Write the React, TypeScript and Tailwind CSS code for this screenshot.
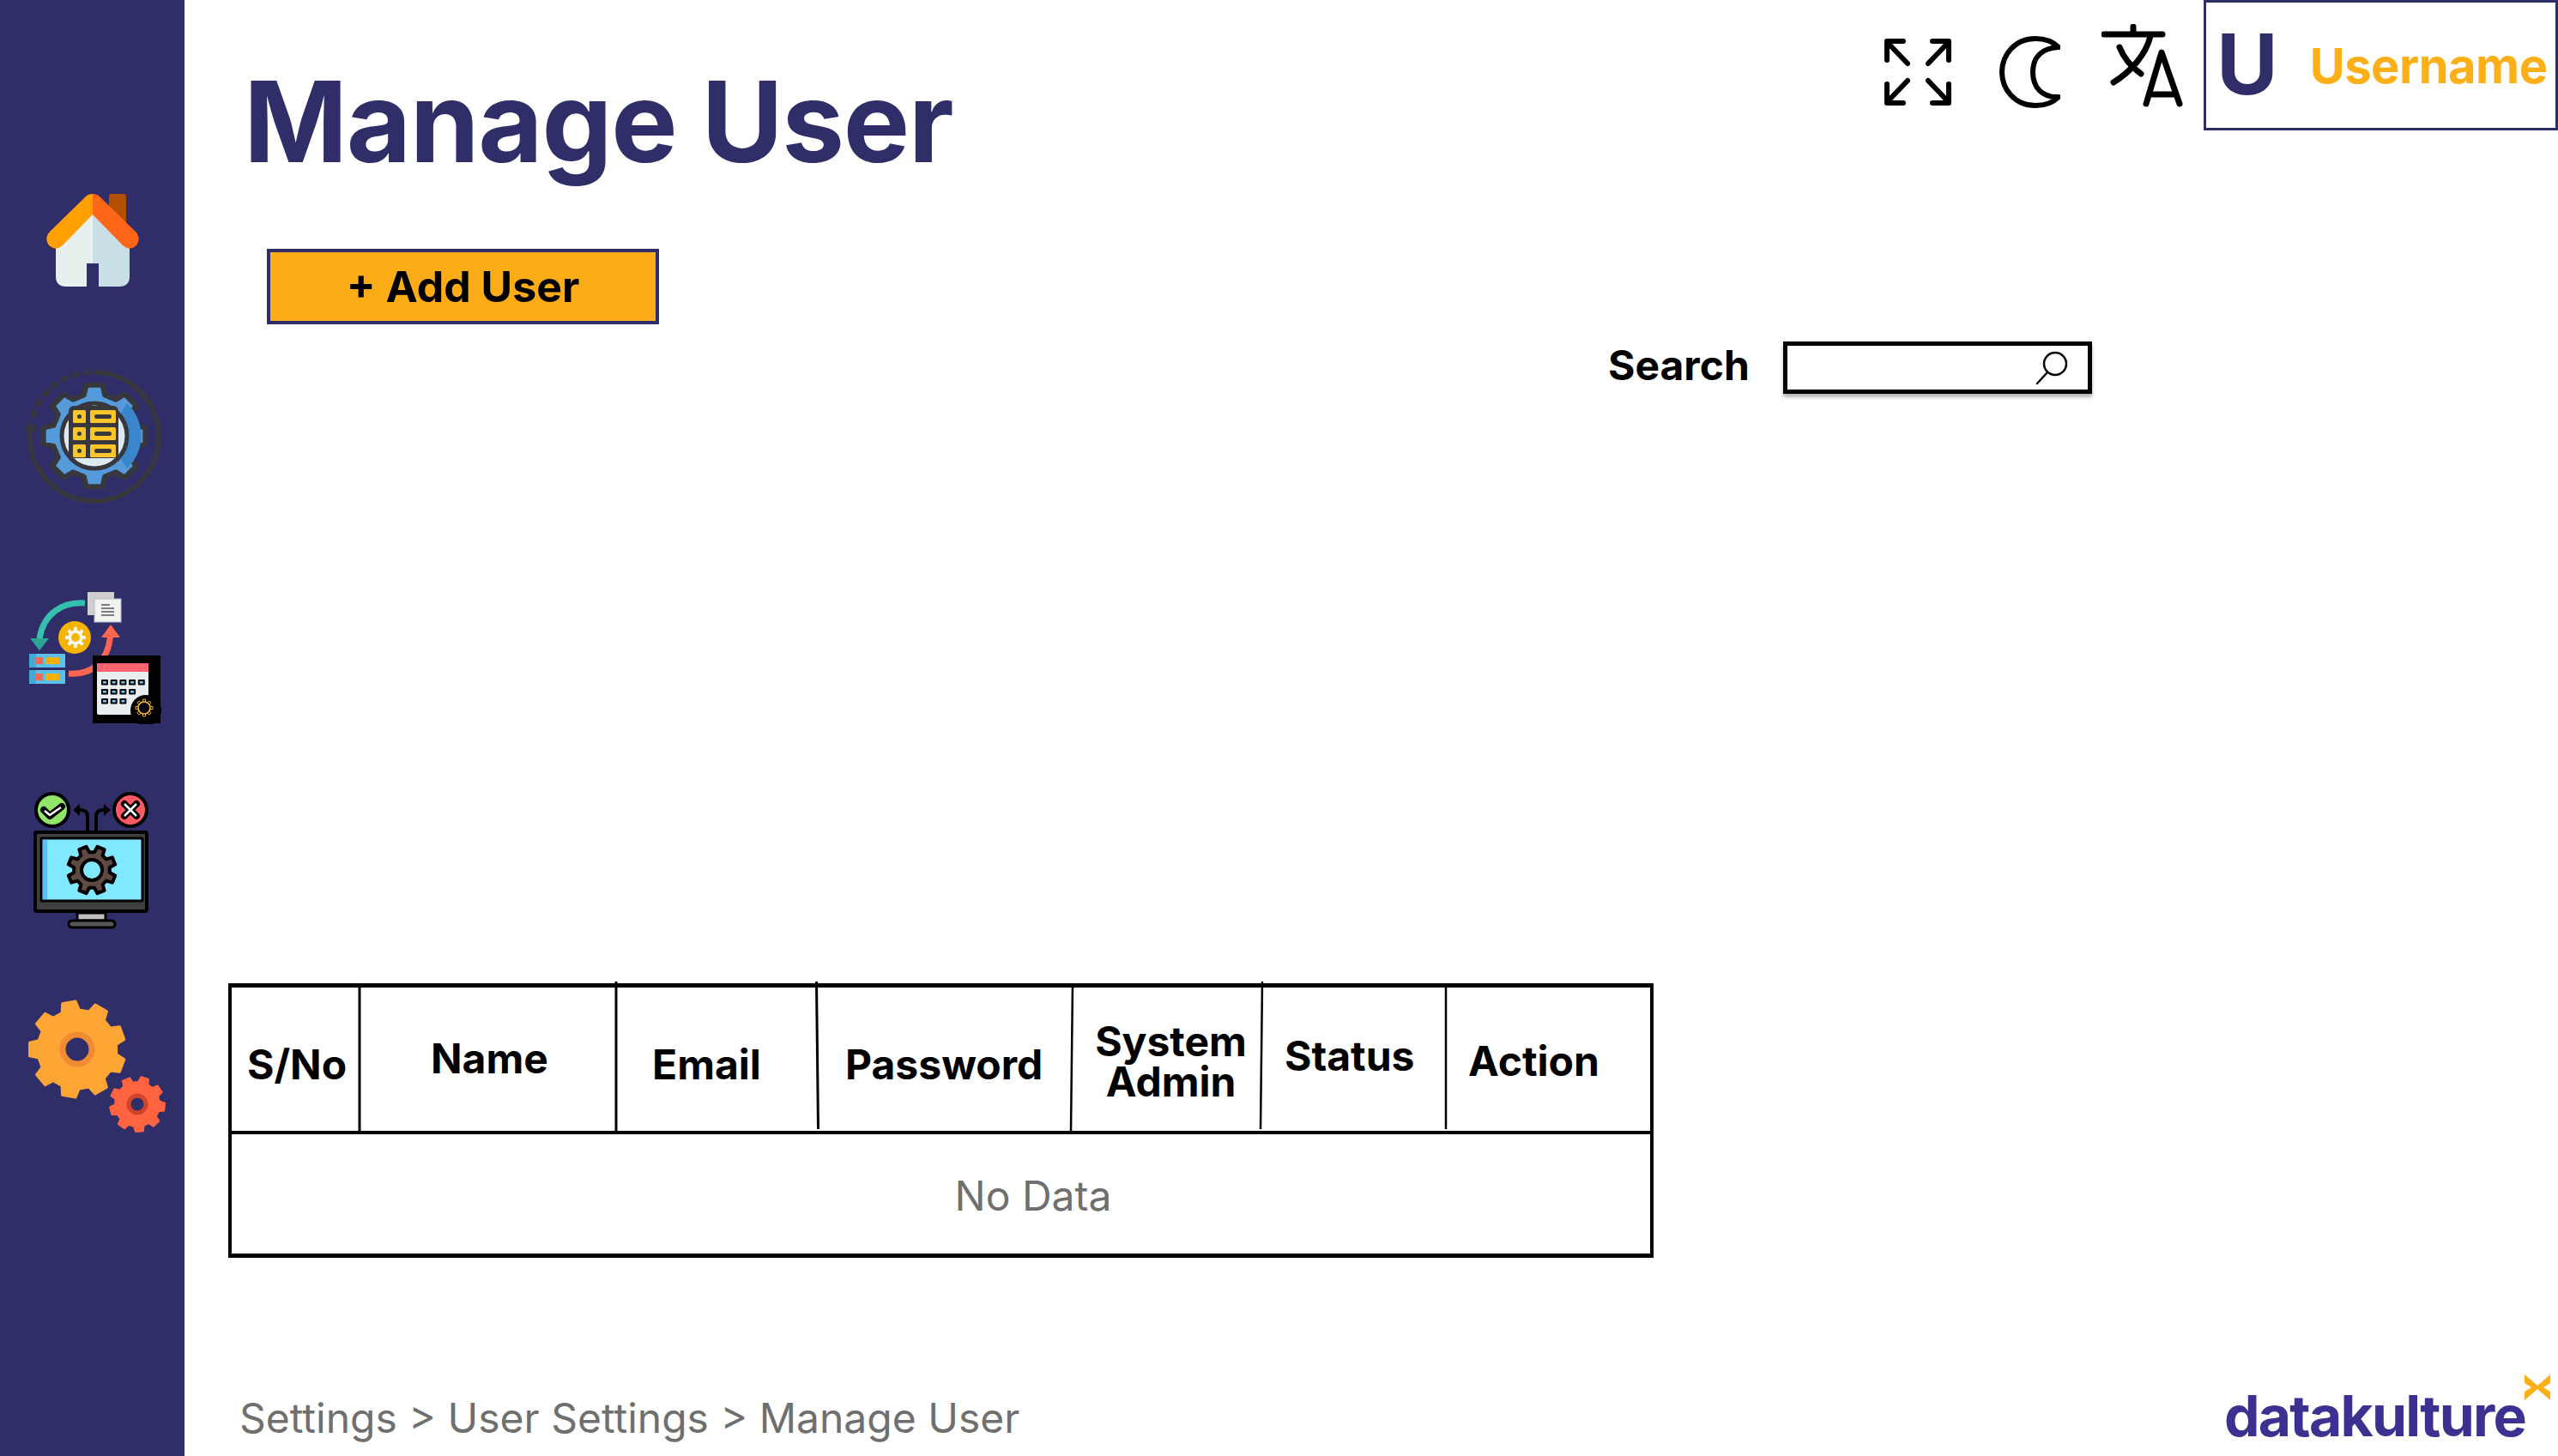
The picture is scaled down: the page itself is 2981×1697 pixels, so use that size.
import React from "react";

const NAVY = "#2f2e69";

function gearPath(cx: number, cy: number, r: number, rr: number, teeth: number, phase = 0) {
  const pts: string[] = [];
  const step = (Math.PI * 2) / teeth;
  for (let i = 0; i < teeth; i++) {
    const a = phase + i * step;
    const list: [number, number][] = [
      [rr, a - step * 0.32],
      [r, a - step * 0.2],
      [r, a + step * 0.2],
      [rr, a + step * 0.32],
    ];
    for (const [rad, ang] of list) {
      pts.push(`${(cx + rad * Math.cos(ang)).toFixed(1)} ${(cy + rad * Math.sin(ang)).toFixed(1)}`);
    }
  }
  return "M" + pts.join("L") + "Z";
}

function Home() {
  return (
    <svg width="108" height="108" viewBox="0 0 108 108" className="ml-[54px] mt-[226px] shrink-0">
      <rect x="73" y="0" width="20" height="40" rx="3" fill="#b35000" />
      <path d="M54 22L11 62V96Q11 108 23 108H47V81H54Z" fill="#e8f0ef" />
      <path d="M54 22L97 62V96Q97 108 85 108H61V81H54Z" fill="#c8e0e5" />
      <path d="M54 0C50 0 48 1 45 4L4 44Q-3 52 3 60Q11 67 19 60L54 24Z" fill="#ff9f00" />
      <path d="M54 0C58 0 60 1 63 4L104 44Q111 52 105 60Q97 67 89 60L54 24Z" fill="#ff6618" />
    </svg>
  );
}

function GearDb() {
  return (
    <svg width="160" height="160" viewBox="30 429 160 160" className="ml-[30px] mt-[95px] shrink-0">
      <path d="M110 434A75 75 0 1 1 35 508V497" fill="none" stroke="#38383c" strokeWidth="5.5" />
      <path d="M27 502L35 493L43 502Z" fill="#38383c" stroke="#38383c" strokeWidth="2" strokeLinejoin="round" />
      <path d="M39 484A73 73 0 0 1 102 434" fill="none" stroke="#38383c" strokeWidth="6" strokeLinecap="round" strokeDasharray="4 10" />
      <path d={gearPath(110, 508, 60, 49, 8, Math.PI / 4)} fill="#559bdb" stroke="#38383c" strokeWidth="6" strokeLinejoin="round" />
      <path d="M148 470A52 52 0 0 1 148 546L138 530Q150 508 138 486Z" fill="#3a86cc" />
      <circle cx="110" cy="508" r="38" fill="#dce9f3" stroke="#38383c" strokeWidth="5" />
      <rect x="80" y="473" width="58" height="61" rx="6" fill="#38383c" />
      {[478, 498, 518].map((y) => (
        <g key={y}>
          <rect x="85" y={y} width="15" height="15" rx="1.5" fill="#fcc52a" />
          <rect x="105" y={y} width="30" height="15" rx="1.5" fill="#fcc52a" />
          <circle cx="92.5" cy={y + 7.5} r="2.5" fill="#38383c" />
          <rect x="110" y={y + 5} width="20" height="5" rx="2.5" fill="#38383c" />
        </g>
      ))}
    </svg>
  );
}

function Workflow() {
  return (
    <svg width="155" height="155" viewBox="33 689 155 155" className="ml-[33px] mt-[100px] shrink-0">
      <rect x="102" y="690" width="31" height="27" fill="#cfcfcf" />
      <rect x="110" y="698" width="31" height="27" fill="#f2f2f2" stroke="#b9b9c8" strokeWidth="1" />
      <path d="M118 705H128M118 709H133M118 713H133M118 717H133" stroke="#555" strokeWidth="1.5" />
      <path d="M99 703C72 701 50 716 46 745" fill="none" stroke="#35bfae" strokeWidth="7" />
      <path d="M35 744H57L46 758Z" fill="#2ba696" />
      <ellipse cx="87" cy="743" rx="19" ry="19" fill="#f4b400" />
      <path d={gearPath(88, 743, 12, 8.5, 8)} fill="#f5f5f5" />
      <circle cx="88" cy="743" r="5" fill="#f4b400" />
      {[762, 781].map((y) => (
        <g key={y}>
          <rect x="34" y={y} width="42" height="16" fill="#5bc0eb" />
          <rect x="34" y={y} width="8" height="16" fill="#46a8d4" />
          <rect x="42" y={y + 4} width="8" height="8" fill="#ff6651" />
          <rect x="53" y={y + 4} width="16" height="8" fill="#f9b000" />
        </g>
      ))}
      <path d="M80 785C108 787 128 770 129 735" fill="none" stroke="#ff6651" strokeWidth="7" />
      <path d="M118 743H140L129 728Z" fill="#ff6651" />
      <rect x="108" y="764" width="79" height="79" fill="#000" />
      <rect x="113" y="775" width="60" height="58" rx="2" fill="#e9eef1" />
      <rect x="113" y="773" width="60" height="10" fill="#ff6470" />
      {[[0, 5], [1, 4], [2, 3]].map(([row, n]) =>
        Array.from({ length: n }).map((_, i) => (
          <g key={`${row}-${i}`}>
            <rect x={118 + i * 10.7} y={792 + row * 11} width="8" height="6.5" rx="1" fill="#000" />
            <rect x={120 + i * 10.7} y={794 + row * 11} width="4" height="2.5" fill="#7cc4f0" />
          </g>
        ))
      )}
      <circle cx="170" cy="828" r="18" fill="#000" />
      <circle cx="168" cy="825" r="7" fill="none" stroke="#f4b12c" strokeWidth="1.6" />
      <path d={gearPath(168, 825, 10, 7, 8)} fill="none" stroke="#f4b12c" strokeWidth="1" />
    </svg>
  );
}

function Monitor() {
  return (
    <svg width="136" height="161" viewBox="38 922 136 161" className="ml-[38px] mt-[78px] shrink-0">
      <path d="M102 968V952Q102 944 94 944H88M112 968V952Q112 944 120 944H126" fill="none" stroke="#000" strokeWidth="4" />
      <path d="M85 944L93 937V951Z M129 944L121 937V951Z" fill="#000" />
      <circle cx="61" cy="944" r="19" fill="#93e56a" stroke="#000" strokeWidth="4" />
      <circle cx="152" cy="944" r="19" fill="#ff5a64" stroke="#000" strokeWidth="4" />
      <path d="M51 944L58 951L72 940" fill="none" stroke="#000" strokeWidth="8" strokeLinecap="round" strokeLinejoin="round" />
      <path d="M52 945L58 950L71 941" fill="none" stroke="#fff" strokeWidth="2.5" />
      <path d="M145 937L159 951M159 937L145 951" stroke="#000" strokeWidth="8" strokeLinecap="round" />
      <path d="M145 937L159 951M159 937L145 951" stroke="#fff" strokeWidth="2.5" />
      <rect x="41" y="970" width="130" height="92" rx="2" fill="#3f3f3f" stroke="#000" strokeWidth="4" />
      <rect x="48" y="977" width="118" height="73" rx="1" fill="#80e8ff" stroke="#000" strokeWidth="3" />
      <rect x="50" y="979" width="5" height="69" fill="#5cc0ff" />
      <path d={gearPath(107, 1014, 28, 21, 8, Math.PI / 8)} fill="#5e4a42" stroke="#000" strokeWidth="4" strokeLinejoin="round" />
      <circle cx="107" cy="1014" r="12" fill="#80e8ff" stroke="#000" strokeWidth="4" />
      <rect x="90" y="1064" width="33" height="9" fill="#bfbfbf" stroke="#000" strokeWidth="3" />
      <rect x="80" y="1073" width="54" height="8" rx="4" fill="#555" stroke="#000" strokeWidth="3" />
    </svg>
  );
}

function Gears() {
  return (
    <svg width="170" height="165" viewBox="30 1160 170 165" className="ml-[30px] mt-[78px] shrink-0">
      <path d={gearPath(90, 1222, 56, 46, 9, 0.35)} fill="#fda535" stroke="#fda535" strokeWidth="3" strokeLinejoin="round" />
      <circle cx="90" cy="1222" r="17" fill={NAVY} stroke="#f08a33" strokeWidth="7" />
      <path d={gearPath(160, 1286, 32, 26, 9, 0.1)} fill="#ff6340" stroke="#ff6340" strokeWidth="2" strokeLinejoin="round" />
      <circle cx="160" cy="1286" r="10" fill={NAVY} stroke="#d1442a" strokeWidth="5" />
    </svg>
  );
}

function ExpandIcon() {
  return (
    <svg width="78" height="78" viewBox="0 0 78 78" fill="none" stroke="#000" strokeWidth="6" strokeLinecap="round" strokeLinejoin="round" className="mt-[45px] shrink-0">
      <path d="M22 3H3V25M5 6L27 29" />
      <path d="M56 3H75V25M73 6L51 29" />
      <path d="M22 75H3V53M5 72L27 49" />
      <path d="M56 75H75V53M73 72L51 49" />
    </svg>
  );
}

function MoonIcon() {
  return (
    <svg width="71" height="84" viewBox="0 0 71 84" fill="none" stroke="#000" strokeWidth="6" strokeLinejoin="round" strokeLinecap="round" className="ml-[56px] mt-[42px] shrink-0">
      <path d="M69 13C60 4 50 3 42 3C18 3 3 22 3 42C3 62 18 81 42 81C52 81 62 78 69 71C50 72 39 60 39 42C39 24 50 14 69 13Z" />
    </svg>
  );
}

function TranslateIcon() {
  return (
    <svg width="96" height="97" viewBox="0 0 96 97" fill="none" stroke="#000" strokeWidth="7" strokeLinecap="round" strokeLinejoin="round" className="ml-[48px] mt-[28px] shrink-0">
      <path d="M3 12H71M37 3V12" />
      <path d="M57 14C52 35 35 55 14 68" />
      <path d="M21 27C26 40 35 50 46 58" />
      <path d="M52 93L70 33L91 93M57 82H86" />
    </svg>
  );
}

function SearchGlass() {
  return (
    <svg width="40" height="40" viewBox="0 0 40 40" fill="none" stroke="#000" strokeWidth="2.5" strokeLinecap="round" className="shrink-0">
      <circle cx="24" cy="15" r="13" />
      <path d="M15 25L3 38" />
    </svg>
  );
}

const cols = [
  { w: "w-[149px]", p: "pl-[18px] pt-[66px] leading-none", text: "S/No" },
  { w: "w-[300px]", p: "pl-[83px] pt-[59px] leading-none", text: "Name" },
  { w: "w-[233px]", p: "pl-[41px] pt-[66px] leading-none", text: "Email" },
  { w: "w-[297px]", p: "pl-[33px] pt-[66px] leading-none", text: "Password" },
  { w: "w-[221px]", p: "pl-[10px] pt-[39px] leading-[47px] text-center", text: "System" },
  { w: "w-[215px]", p: "pl-[27px] pt-[56px] leading-none", text: "Status" },
  { w: "w-[238px]", p: "pl-[26px] pt-[62px] leading-none", text: "Action" },
];

export default function App() {
  return (
    <div className="flex w-[2981px] h-[1697px] overflow-hidden bg-white font-['Inter',sans-serif]">
      <aside className="flex flex-col w-[215px] h-full bg-[#2f2e69] shrink-0">
        <Home />
        <GearDb />
        <Workflow />
        <Monitor />
        <Gears />
      </aside>
      <main className="flex flex-col flex-1 min-w-0 h-full">
        <header className="flex justify-between h-[290px] shrink-0">
          <h1 className="ml-[69px] mt-[77px] text-[130px] leading-none font-bold text-[#2f2e69] tracking-[-1.4px]">Manage User</h1>
          <div className="flex items-start">
            <ExpandIcon />
            <MoonIcon />
            <TranslateIcon />
            <div className="flex items-start w-[413px] h-[152px] ml-[23px] border-[3px] border-[#2f2e69] box-border">
              <span className="ml-[12px] mt-[23px] text-[98px] leading-none font-bold text-[#2f2e69]">U</span>
              <span className="ml-[37px] mt-[46px] text-[56px] leading-none font-bold text-[#fdaf17] tracking-[-0.5px]">Username</span>
            </div>
          </div>
        </header>
        <button className="flex items-center justify-center ml-[96px] w-[457px] h-[88px] shrink-0 box-border border-4 border-[#2f2e69] bg-[#fcac17] text-[50px] font-bold text-black leading-none">
          + Add User
        </button>
        <div className="flex items-center ml-[1659px] mt-[20px] h-[61px] shrink-0">
          <span className="mb-[6px] text-[48px] font-bold leading-none text-black">Search</span>
          <div className="flex items-center justify-end ml-[39px] w-[360px] h-[61px] pr-[22px] box-border border-[5px] border-black bg-white shadow-[0_4px_4px_rgba(0,0,0,0.3)]">
            <SearchGlass />
          </div>
        </div>
        <div className="relative ml-[51px] mt-[687px] w-[1661px] h-[320px] shrink-0 box-border border-x-4 border-y-[5px] border-black">
          <div className="flex h-[171px] box-border border-b-4 border-black">
            {cols.map((c) => (
              <div key={c.text} className={`${c.w} ${c.p} shrink-0 text-[48px] font-bold text-black`}>
                {c.text === "System" ? (
                  <>
                    System
                    <br />
                    Admin
                  </>
                ) : (
                  c.text
                )}
              </div>
            ))}
          </div>
          <div className="flex items-center justify-center h-[139px] pl-[215px] pt-[4px] text-[48px] leading-none text-[#6f6f6f]">No Data</div>
          <svg width="1661" height="180" viewBox="266 1141 1661 180" className="absolute left-[-4px] top-[-10px] pointer-events-none">
            <g stroke="#000" fill="none">
              <path d="M419 1146V1318" strokeWidth="3" />
              <path d="M718 1144V1318" strokeWidth="3" />
              <path d="M951.5 1144L953.5 1316" strokeWidth="3" />
              <path d="M1250 1146L1248 1318" strokeWidth="2.5" />
              <path d="M1471 1144L1469 1316" strokeWidth="2.5" />
              <path d="M1685 1146V1316" strokeWidth="2.5" />
            </g>
          </svg>
        </div>
        <footer className="flex justify-between items-end mt-auto h-[80px] shrink-0">
          <span className="ml-[64px] mb-[20px] text-[48px] leading-none text-[#6f6f6f]">Settings &gt; User Settings &gt; Manage User</span>
          <div className="relative mr-[39px] mb-[14px] w-[350px] h-[64px] flex items-end">
            <span className="text-[66px] leading-none font-bold text-[#3c3190] tracking-[-1.8px]">datakulture</span>
            <svg width="31" height="30" viewBox="0 0 31 30" className="absolute left-[350px] top-[-17px]">
              <path d="M0 0L15 13L30 0V10L22 15L30 20V30L15 17L0 30V20L8 15L0 10Z" fill="#fdaf17" />
            </svg>
          </div>
        </footer>
      </main>
    </div>
  );
}
